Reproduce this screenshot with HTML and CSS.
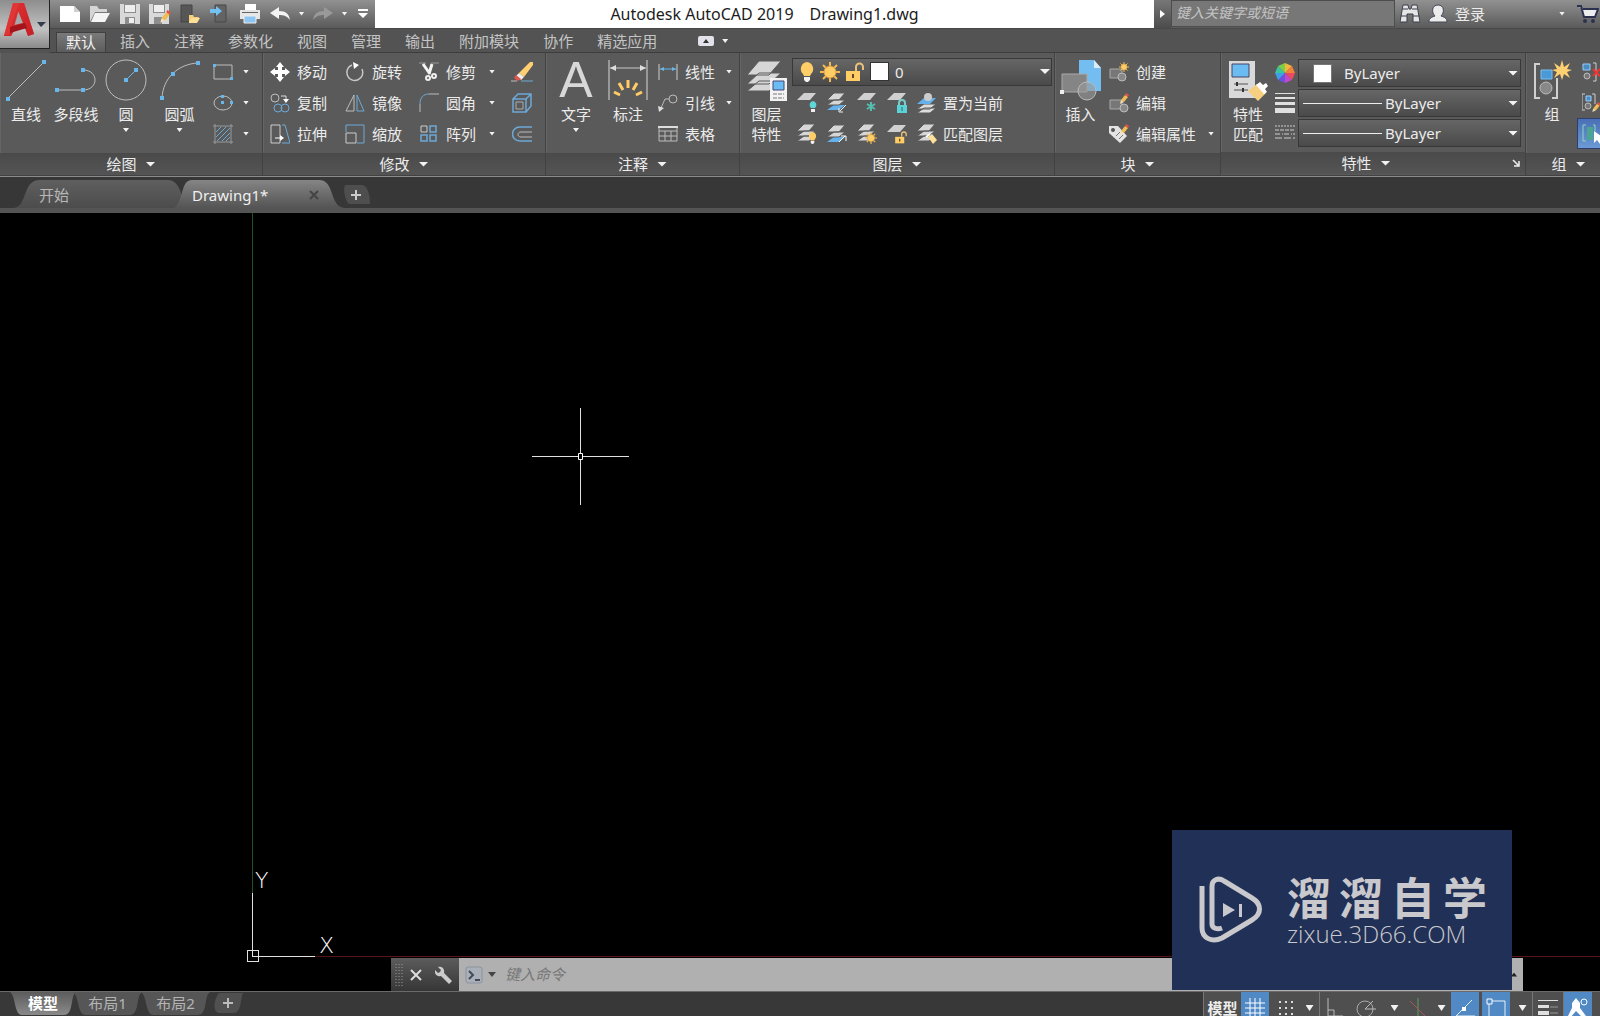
FILE: index.html
```html
<!DOCTYPE html>
<html lang="zh-CN">
<head>
<meta charset="utf-8">
<title>Autodesk AutoCAD 2019 - Drawing1.dwg</title>
<link rel="stylesheet" href="styles.css">
</head>
<body>
<svg class="sprite" aria-hidden="true">
  <defs>
    <linearGradient id="tabIdle" x1="0" y1="0" x2="0" y2="1"><stop offset="0" stop-color="#5f5f5f"/><stop offset="1" stop-color="#4c4c4c"/></linearGradient>
    <linearGradient id="tabOn" x1="0" y1="0" x2="0" y2="1"><stop offset="0" stop-color="#858585"/><stop offset="1" stop-color="#545454"/></linearGradient>
    <linearGradient id="layoutOn" x1="0" y1="0" x2="0" y2="1"><stop offset="0" stop-color="#5c5c5c"/><stop offset="1" stop-color="#8a8a8a"/></linearGradient>
    <linearGradient id="logoRed" x1="0" y1="0" x2="1" y2="1"><stop offset="0" stop-color="#f0453e"/><stop offset="1" stop-color="#a8141c"/></linearGradient>
  </defs>
  <symbol id="sheets" viewBox="0 0 20 20">
    <path d="M0 19l7-5h11l-6 5zM0 14l7-5h11l-6 5zM0 9l7-7h11l-6 7z" fill="#d6d6d6" stroke="#5a5a5a"/>
  </symbol>
  <symbol id="sheet" viewBox="0 0 20 20"><path d="M0 10l7-7h12l-6 7z" fill="#d0d0d0"/></symbol>
  <symbol id="blue-sheets" viewBox="0 0 20 20">
    <path d="M0 19l7-5h11l-6 5z" fill="#64b1ec"/><path d="M0 14l7-5h11l-6 5zM0 9l7-7h11l-6 7z" fill="#d6d6d6" stroke="#5a5a5a"/>
  </symbol>
  <symbol id="pencil" viewBox="0 0 10 12"><path d="M1 11l1-4 3 2z" fill="#f4e3c0"/><path d="M2 7l4-5 3 2-4 5z" fill="#f0bd55"/><path d="M6 2l1-2 3 2-1 2z" fill="#e2564a"/></symbol>
  <symbol id="bulb" viewBox="0 0 14 20"><path d="M7 0a7 7 0 0 0-4 12l1 2h6l1-2A7 7 0 0 0 7 0z" fill="#ffce66"/><path d="M4 15h6v3l-2 2H6l-2-2z" fill="#f2f2f2"/></symbol>
  <symbol id="sun" viewBox="0 0 20 20"><path d="M10 0v20M0 10h20M3 3l14 14M17 3L3 17" stroke="#f3b955" stroke-width="2"/><circle cx="10" cy="10" r="6" fill="#ffcc66" stroke="#d99d3c"/></symbol>
  <symbol id="unlock" viewBox="0 0 18 20"><path d="M10 9V5a3.500 3.500 0 0 1 7 0v3" fill="none" stroke="#e8c27b" stroke-width="2"/><rect y="9" width="14" height="10" fill="#ffcc66"/><path d="M7 12v4" stroke="#5a4a2a" stroke-width="2"/></symbol>
</svg>

<header class="top">
  <button class="app-menu" aria-label="应用程序菜单">
    <svg width="46" height="46" viewBox="0 0 46 46">
      <path d="M13 2h11l10 31-6 2-3-8-10 1-4 7H4z" fill="url(#logoRed)"/>
      <path d="M13 2h6l-6 18-4 14H4z" fill="#f05a50" opacity=".7"/>
      <path d="M18 10l5 12-9 2z" fill="#a8a8a8"/>
      <path d="M13 2h11l10 31-6 2-9-26-4 14-4 12H4z" fill="#d8262c" opacity=".6"/>
      <path d="M10 26l15-4 2 5-17 5z" fill="#a3141b"/>
      <path d="M37 21h9l-5 5z" fill="#333b4c"/>
    </svg>
  </button>

  <div class="titlebar">
    <div class="quick">
      <button aria-label="新建"><svg width="20" height="18" viewBox="0 0 20 18"><path d="M0 1h14l6 6v10H0z" fill="#fff"/><path d="M14 1v6h6z" fill="#cfcfcf"/></svg></button>
      <button aria-label="打开"><svg width="20" height="18" viewBox="0 0 20 18"><path d="M0 17V1h7l2 3h8v3H5z" fill="#d5d5d5"/><path d="M5 8h15l-5 9H1z" fill="#f4f4f4"/></svg></button>
      <button aria-label="保存"><svg width="20" height="20" viewBox="0 0 20 20"><path d="M0 0h20v20H0z" fill="#d9d9d9"/><path d="M4 0h12v9H4zM5 13h10v7H5z" fill="#8d8d8d"/><path d="M5 1h10v7H5zM9 14h5v5H9z" fill="#eee"/></svg></button>
      <button aria-label="另存为"><svg width="22" height="20" viewBox="0 0 22 20"><path d="M0 0h20v20H0z" fill="#d9d9d9"/><path d="M4 0h12v9H4zM5 13h8v7H5z" fill="#8d8d8d"/><path d="M5 1h10v7H5z" fill="#eee"/><use href="#pencil" x="10" y="6" width="12" height="14"/></svg></button>
      <button aria-label="从移动设备打开"><svg width="20" height="20" viewBox="0 0 20 20"><path d="M1 1h11v17H1z" fill="#565656" stroke="#444"/><path d="M9 18v-7h4l1 2h5l-3 6H9z" fill="#f5cf7c"/><path d="M9 18l3-4h8l-3 5H9z" fill="#ffdf98"/></svg></button>
      <button aria-label="保存到移动设备"><svg width="20" height="20" viewBox="0 0 20 20"><path d="M5 1h11v17H5z" fill="#636363" stroke="#484848"/><path d="M0 5h6V2l6 5-6 5V9H0z" fill="#74c2f4"/></svg></button>
      <button aria-label="打印"><svg width="20" height="20" viewBox="0 0 20 20"><path d="M5 0h11v6H5z" fill="#fff"/><path d="M0 6h20v9H0z" fill="#e6e6e6"/><path d="M2 8h16v1H2z" fill="#666"/><path d="M4 12h12v7H4z" fill="#8dc6f2" stroke="#eee"/></svg></button>
      <button aria-label="放弃"><svg width="20" height="14" viewBox="0 0 20 14"><path d="M0 6l9-6v4c7 0 10 3 11 9-3-4-6-5-11-5v4z" fill="#f4f4f4"/></svg></button>
      <button class="narrow" aria-label="放弃列表"><i class="caret"></i></button>
      <button aria-label="重做"><svg width="20" height="14" viewBox="0 0 20 14"><path d="M20 6l-9-6v4C4 4 1 7 0 13c3-4 6-5 11-5v4z" fill="#999"/></svg></button>
      <button class="narrow" aria-label="重做列表"><i class="caret"></i></button>
      <button class="menu" aria-label="自定义快速访问工具栏"><svg width="10" height="10" viewBox="0 0 10 10"><path d="M0 0h10v2H0zM0 4h10l-5 5z" fill="#fff"/></svg></button>
    </div>
    <h1 class="title"><span>Autodesk AutoCAD 2019</span><span>Drawing1.dwg</span></h1>
    <button class="search-toggle" aria-label="收拢搜索"><svg width="5" height="8" viewBox="0 0 5 8"><path d="M0 0l5 4-5 4z" fill="#fff"/></svg></button>
    <input class="search" type="text" placeholder="键入关键字或短语" aria-label="搜索">
    <div class="account">
      <button aria-label="查找"><svg width="20" height="20" viewBox="0 0 20 20"><path d="M3 1h5l1 4h2l1-4h5l3 17h-7v-8H7v8H0z" fill="#e4e4e4" stroke="#3c3f4c"/><path d="M1 12h6M13 12h6M3 5h5M12 5h5" stroke="#3c3f4c"/></svg></button>
      <button class="login"><svg width="20" height="20" viewBox="0 0 20 20"><path d="M1 18c0-4 3-5 6-6-4-4-3-11 3-11s7 7 3 11c3 1 6 2 6 6z" fill="#ececec" stroke="#444859"/></svg><span>登录</span></button>
      <button class="narrow" aria-label="账户菜单"><i class="caret"></i></button>
      <button aria-label="应用商店"><svg width="22" height="20" viewBox="0 0 22 20"><path d="M0 2h4l3 11h11l3-8H6" fill="#eee" stroke="#2d3150" stroke-width="2"/><circle cx="8" cy="17" r="2" fill="#2d3150"/><circle cx="16" cy="17" r="2" fill="#2d3150"/></svg></button>
    </div>
  </div>

  <nav class="ribbon-tabs">
    <button class="on">默认</button><button>插入</button><button>注释</button><button>参数化</button><button>视图</button><button>管理</button><button>输出</button><button>附加模块</button><button>协作</button><button>精选应用</button>
    <button class="minimize" aria-label="最小化功能区"><svg width="16" height="10" viewBox="0 0 16 10"><rect width="16" height="10" rx="2" fill="#e2e2ea"/><path d="M5 7l3-4 3 4z" fill="#333"/></svg><i class="caret"></i></button>
  </nav>
</header>

<main class="ribbon">
  <section class="panel draw">
    <div class="body">
      <button class="big"><svg width="44" height="44" viewBox="0 0 44 44"><path d="M4 40L40 4" stroke="#bdbdbd"/><path d="M2 39h4v4H2zM38 2h4v4h-4z" fill="#69b7ea"/></svg><span>直线</span></button>
      <button class="big"><svg width="44" height="44" viewBox="0 0 44 44"><path d="M3 32h26c16 0 16-20 0-20" fill="none" stroke="#bdbdbd"/><path d="M1 30h4v4H1zM27 30h4v4h-4zM27 10h4v4h-4z" fill="#69b7ea"/></svg><span>多段线</span></button>
      <button class="big"><svg width="44" height="44" viewBox="0 0 44 44"><circle cx="22" cy="22" r="20" fill="none" stroke="#bdbdbd"/><path d="M22 22L33 11" stroke="#69b7ea"/><path d="M20 20h4v4h-4zM30 10h4v4h-4z" fill="#69b7ea"/></svg><span>圆</span><i class="caret"></i></button>
      <button class="big"><svg width="44" height="44" viewBox="0 0 44 44"><path d="M4 40C5 20 20 6 40 5" fill="none" stroke="#bdbdbd"/><path d="M2 38h4v4H2zM13 14h4v4h-4zM38 3h4v4h-4z" fill="#69b7ea"/></svg><span>圆弧</span><i class="caret"></i></button>
      <div class="stack">
        <div class="row"><button class="ico" aria-label="矩形"><svg width="20" height="20" viewBox="0 0 20 20"><path d="M1 3h18v14H1z" fill="none" stroke="#bdbdbd"/><path d="M0 2h3v3H0zM17 15h3v3h-3z" fill="#69b7ea"/></svg></button><button class="drop" aria-label="矩形选项"><i class="caret"></i></button></div>
        <div class="row"><button class="ico" aria-label="椭圆"><svg width="20" height="20" viewBox="0 0 20 20"><ellipse cx="10" cy="10" rx="9" ry="7" fill="none" stroke="#bdbdbd"/><path d="M8 8h3v3H8zM8 2h3v3H8zM17 8h3v3h-3z" fill="#69b7ea"/></svg></button><button class="drop" aria-label="椭圆选项"><i class="caret"></i></button></div>
        <div class="row"><button class="ico" aria-label="图案填充"><svg width="20" height="20" viewBox="0 0 20 20"><path d="M3 8l5-5M3 13L13 3M4 17L17 4M9 17l8-8M13 17l4-4" stroke="#6da9d6"/><path d="M2 0v20M18 0v20M0 2h20M0 18h20" stroke="#999"/></svg></button><button class="drop" aria-label="填充选项"><i class="caret"></i></button></div>
      </div>
    </div>
    <button class="foot">绘图<i class="caret wide"></i></button>
  </section>

  <section class="panel modify">
    <div class="body">
      <div class="stack">
        <button class="tool"><svg width="20" height="20" viewBox="0 0 20 20"><path d="M10 0l4 5h-2v3h3V6l5 4-5 4v-2h-3v3h2l-4 5-4-5h2v-3H5v2l-5-4 5-4v2h3V5H6z" fill="#fff"/></svg><span>移动</span></button>
        <button class="tool"><svg width="20" height="20" viewBox="0 0 20 20"><circle cx="5" cy="5" r="4" fill="none" stroke="#bdbdbd"/><circle cx="8" cy="15" r="4" fill="none" stroke="#6da9d6"/><circle cx="15" cy="15" r="4" fill="none" stroke="#6da9d6"/><path d="M11 3h5v4" fill="none" stroke="#ddd"/><path d="M13 6h6l-3 4z" fill="#fff"/></svg><span>复制</span></button>
        <button class="tool"><svg width="20" height="20" viewBox="0 0 20 20"><path d="M1 1h9v18H1z" fill="none" stroke="#ccc"/><path d="M12 1h3l5 18h-8" fill="none" stroke="#6da9d6"/><path d="M5 14h6" stroke="#fff"/><path d="M10 11l4 3-4 3z" fill="#fff"/></svg><span>拉伸</span></button>
      </div>
      <div class="stack second">
        <button class="tool"><svg width="20" height="20" viewBox="0 0 20 20"><path d="M7 3a8 8 0 1 0 10 4" fill="none" stroke="#c8c8c8" stroke-width="1.500"/><path d="M8 0l6 3-5 4z" fill="#fff"/></svg><span>旋转</span></button>
        <button class="tool"><svg width="20" height="20" viewBox="0 0 20 20"><path d="M9 2v16H1z" fill="none" stroke="#bdbdbd"/><path d="M12 2v16h7z" fill="none" stroke="#6da9d6"/></svg><span>镜像</span></button>
        <button class="tool"><svg width="20" height="20" viewBox="0 0 20 20"><path d="M1 8V1h18v18h-7" fill="none" stroke="#6da9d6"/><path d="M1 9h10v10H1z" fill="none" stroke="#ccc"/></svg><span>缩放</span></button>
      </div>
      <div class="stack split">
        <div class="row"><button class="tool"><svg width="20" height="20" viewBox="0 0 20 20"><path d="M0 1h7M12 1h8" stroke="#999"/><path d="M4 2l7 10M13 2l-3 10" stroke="#f4f4f4" stroke-width="3"/><circle cx="9" cy="16" r="2" fill="none" stroke="#eee" stroke-width="2"/><circle cx="15" cy="14" r="2" fill="none" stroke="#eee" stroke-width="2"/></svg><span>修剪</span></button><button class="drop" aria-label="修剪选项"><i class="caret"></i></button></div>
        <div class="row"><button class="tool"><svg width="20" height="20" viewBox="0 0 20 20"><path d="M10 1h10M1 11v8" stroke="#bbb"/><path d="M1 11C1 5 4 1 10 1" fill="none" stroke="#6da9d6"/></svg><span>圆角</span></button><button class="drop" aria-label="圆角选项"><i class="caret"></i></button></div>
        <div class="row"><button class="tool"><svg width="20" height="20" viewBox="0 0 20 20"><path d="M11 2h6v6h-6zM2 11h6v6H2zM11 11h6v6h-6z" fill="none" stroke="#6da9d6" stroke-width="1.500"/><path d="M2 2h6v6H2z" fill="none" stroke="#ccc"/></svg><span>阵列</span></button><button class="drop" aria-label="阵列选项"><i class="caret"></i></button></div>
      </div>
      <div class="stack">
        <button class="ico" aria-label="删除"><svg width="22" height="20" viewBox="0 0 22 20"><path d="M8 11L19 0h3v3l-9 12z" fill="#ffcf70"/><path d="M8 11l5 4-3 3-5-4z" fill="#eee"/><path d="M5 13l5 4-3 2-4-3z" fill="#e3564b"/><path d="M0 19h6" stroke="#bbb"/><path d="M10 19h12" stroke="#6da9d6"/></svg></button>
        <button class="ico" aria-label="分解"><svg width="20" height="20" viewBox="0 0 20 20"><path d="M1 6h13v13H1zM1 6l5-5h13v12l-5 6M14 6l5-5" fill="none" stroke="#6da9d6" stroke-width="1.500"/><path d="M4 9h7v7H4z" fill="none" stroke="#aaa"/></svg></button>
        <button class="ico" aria-label="偏移"><svg width="20" height="20" viewBox="0 0 20 20"><path d="M20 3H8C-2 3-2 17 8 17h12" fill="none" stroke="#6da9d6" stroke-width="1.500"/><path d="M20 8H9c-4 0-4 5 0 5h11" fill="none" stroke="#bbb"/></svg></button>
      </div>
    </div>
    <button class="foot">修改<i class="caret wide"></i></button>
  </section>

  <section class="panel annotate">
    <div class="body">
      <button class="big"><b class="glyph-a" aria-hidden="true">A</b><span>文字</span><i class="caret"></i></button>
      <button class="big"><svg width="44" height="44" viewBox="0 0 44 44"><path d="M3 2v40M41 2v40" stroke="#d8d8d8"/><path d="M4 10h36" stroke="#c8c8c8"/><path d="M4 10l6-3v6zM40 10l-6-3v6z" fill="#ddd"/><path d="M22 22v8M13 25l4 7M31 25l-4 7M8 34l6 3M36 34l-6 3" stroke="#ffcc66" stroke-width="3"/></svg><span>标注</span></button>
      <div class="stack split">
        <div class="row"><button class="tool"><svg width="20" height="20" viewBox="0 0 20 20"><path d="M1 2v16M19 2v16" stroke="#ccc"/><path d="M2 7h16" stroke="#69b7ea"/><path d="M2 7l4-2v4zM18 7l-4-2v4z" fill="#69b7ea"/></svg><span>线性</span></button><button class="drop" aria-label="线性选项"><i class="caret"></i></button></div>
        <div class="row"><button class="tool"><svg width="20" height="20" viewBox="0 0 20 20"><circle cx="15" cy="6" r="4" fill="none" stroke="#bbb"/><path d="M11 6H7L3 15" fill="none" stroke="#bbb"/><path d="M0 13l6 2-5 4z" fill="#ddd"/></svg><span>引线</span></button><button class="drop" aria-label="引线选项"><i class="caret"></i></button></div>
        <button class="tool"><svg width="20" height="20" viewBox="0 0 20 20"><path d="M1 3h18v14H1zM1 7h18M1 12h18M7 7v10M13 7v10" fill="none" stroke="#bbb"/><path d="M0 3h20" stroke="#ddd" stroke-width="2"/></svg><span>表格</span></button>
      </div>
    </div>
    <button class="foot">注释<i class="caret wide"></i></button>
  </section>

  <section class="panel layers">
    <div class="body">
      <button class="big"><svg width="44" height="44" viewBox="0 0 44 44"><path d="M2 33l12-10h20L24 33zM2 26l12-11h22L24 26zM2 17L14 3h22L24 17z" fill="#d6d6d6" stroke="#5a5a5a"/><path d="M25 20h17v23H25z" fill="#f2f2f2"/><path d="M28 23h11v9H28z" fill="#6bbcf2" stroke="#447"/><path d="M28 36h11M28 40h11" stroke="#777" stroke-dasharray="4 1"/></svg><span>图层<br>特性</span></button>
      <div class="stack">
        <div class="combo">
          <svg width="14" height="20"><use href="#bulb"/></svg>
          <svg width="20" height="20"><use href="#sun"/></svg>
          <svg width="18" height="20"><use href="#unlock"/></svg>
          <i class="swatch"></i>
          <select aria-label="图层"><option>0</option></select>
        </div>
        <div class="row">
          <button class="ico" aria-label="关闭图层"><svg width="20" height="20" viewBox="0 0 20 20"><use href="#sheet" y="-3"/><path d="M16 8a4 4 0 0 0-2 7h4a4 4 0 0 0-2-7z" fill="#5fd6da"/><path d="M14 16h4v3h-4z" fill="#eee"/></svg></button>
          <button class="ico" aria-label="隔离"><svg width="20" height="20" viewBox="0 0 20 20"><use href="#blue-sheets" y="-2"/><path d="M19 12l-6 6M12 15v4h4" fill="none" stroke="#eee"/></svg></button>
          <button class="ico" aria-label="冻结"><svg width="20" height="20" viewBox="0 0 20 20"><use href="#sheet" y="-3"/><path d="M14 9v9M10 11l8 5M18 11l-8 5" stroke="#55bcae" stroke-width="2"/></svg></button>
          <button class="ico" aria-label="锁定"><svg width="20" height="20" viewBox="0 0 20 20"><use href="#sheet" y="-3"/><path d="M12 12v-2a3 3 0 0 1 6 0v2" fill="none" stroke="#7cc" stroke-width="2"/><path d="M10 12h10v8H10z" fill="#5bd2d5"/><path d="M15 14v4" stroke="#366"/></svg></button>
          <button class="tool wide-tool"><svg width="20" height="20" viewBox="0 0 20 20"><path d="M0 20l7-5h12l-6 5zM0 16l7-5h12l-6 5z" fill="#ddd" stroke="#5a5a5a"/><path d="M0 11l7-6h12l-6 6z" fill="#64b1ec"/><circle cx="11" cy="4" r="4" fill="#ccc"/></svg><span>置为当前</span></button>
        </div>
        <div class="row">
          <button class="ico" aria-label="打开所有图层"><svg width="20" height="20" viewBox="0 0 20 20"><use href="#sheets" y="-2"/><use href="#bulb" x="11" y="8" width="9" height="12"/></svg></button>
          <button class="ico" aria-label="取消隔离"><svg width="20" height="20" viewBox="0 0 20 20"><use href="#blue-sheets" y="-1"/><path d="M12 18l6-6M14 12h5v5" fill="none" stroke="#fff"/></svg></button>
          <button class="ico" aria-label="解冻所有图层"><svg width="20" height="20" viewBox="0 0 20 20"><use href="#sheets" y="-2"/><use href="#sun" x="8" y="8" width="12" height="12"/></svg></button>
          <button class="ico" aria-label="解锁"><svg width="20" height="20" viewBox="0 0 20 20"><use href="#sheet" y="-2"/><use href="#unlock" x="8" y="7" width="12" height="13"/></svg></button>
          <button class="tool wide-tool"><svg width="20" height="20" viewBox="0 0 20 20"><use href="#sheets" y="-2"/><path d="M11 13l4-3 5 6-4 4z" fill="#ffe09a"/><path d="M9 13l4-3" stroke="#fff" stroke-width="2"/></svg><span>匹配图层</span></button>
        </div>
      </div>
    </div>
    <button class="foot">图层<i class="caret wide"></i></button>
  </section>

  <section class="panel block">
    <div class="body">
      <button class="big"><svg width="44" height="44" viewBox="0 0 44 44"><path d="M20 2h15l7 8v23H20z" fill="#74bdf0"/><path d="M35 2v8h7z" fill="#d8ecfa"/><path d="M3 16h25v18H3z" fill="#858585" stroke="#aaa"/><circle cx="28" cy="33" r="9" fill="#999" fill-opacity=".6" stroke="#bbb"/><path d="M1 32h4v4H1z" fill="#eee"/></svg><span>插入</span></button>
      <div class="stack">
        <button class="tool"><svg width="20" height="20" viewBox="0 0 20 20"><path d="M1 7h12v9H1z" fill="#777" stroke="#aaa"/><circle cx="13" cy="15" r="4" fill="#888" stroke="#bbb"/><use href="#sun" x="10" y="0" width="10" height="10"/></svg><span>创建</span></button>
        <button class="tool"><svg width="20" height="20" viewBox="0 0 20 20"><path d="M1 7h12v9H1z" fill="#777" stroke="#aaa"/><circle cx="15" cy="15" r="4" fill="#888" stroke="#bbb"/><use href="#pencil" x="10" y="0" width="10" height="12"/></svg><span>编辑</span></button>
        <div class="row"><button class="tool"><svg width="20" height="20" viewBox="0 0 20 20"><path d="M0 2h9l9 10-7 7L0 9z" fill="#e4e4e4"/><circle cx="4" cy="6" r="2" fill="#555"/><path d="M7 12l4-4M10 15l4-4" stroke="#777"/><use href="#pencil" x="10" y="0" width="10" height="12"/></svg><span>编辑属性</span></button><button class="drop attr" aria-label="编辑属性选项"><i class="caret"></i></button></div>
      </div>
    </div>
    <button class="foot">块<i class="caret wide"></i></button>
  </section>

  <section class="panel props">
    <div class="body">
      <button class="big"><svg width="44" height="44" viewBox="0 0 44 44"><path d="M3 3h26v37H3z" fill="#d9d9d9"/><path d="M6 6h17v13H6z" fill="#6bbcf2" stroke="#446"/><path d="M8 26h14M8 32h14" stroke="#555"/><path d="M11 24v4M17 30v4" stroke="#333" stroke-width="2"/><path d="M22 33l9-7 9 9-8 8z" fill="#f8cf80"/><path d="M30 27l4-3 3 3 3-2 2 3-3 3 2 3-3 2z" fill="#fff"/></svg><span>特性<br>匹配</span></button>
      <div class="stack">
        <div class="row">
          <span class="lead"><svg width="20" height="20" viewBox="0 0 20 20"><path d="M10 10V0l7 3z" fill="#f5b63c"/><path d="M10 10l7-7 3 7z" fill="#f2813c"/><path d="M10 10h10l-3 7z" fill="#ee4a5e"/><path d="M10 10l7 7-7 3z" fill="#c447c8"/><path d="M10 10v10l-7-3z" fill="#6a51e0"/><path d="M10 10l-7 7-3-7z" fill="#3d9fe8"/><path d="M10 10H0l3-7z" fill="#3cc49a"/><path d="M10 10L3 3l7-3z" fill="#7bcf4a"/></svg></span>
          <div class="combo"><i class="swatch"></i><select aria-label="对象颜色"><option>ByLayer</option></select></div>
        </div>
        <div class="row">
          <span class="lead"><svg width="20" height="20" viewBox="0 0 20 20"><path d="M0 0h20v1H0zM0 4h20v2H0zM0 9h20v3H0zM0 15h20v5H0z" fill="#e0e0e0"/></svg></span>
          <div class="combo"><i class="line"></i><select aria-label="线宽"><option>ByLayer</option></select></div>
        </div>
        <div class="row">
          <span class="lead"><svg width="20" height="20" viewBox="0 0 20 20"><path d="M0 3h20" stroke="#ccc" stroke-dasharray="2 1"/><path d="M0 7h20" stroke="#ccc" stroke-dasharray="4 1"/><path d="M0 11h20" stroke="#ccc" stroke-dasharray="5 2 1 1"/><path d="M0 15h20" stroke="#ccc" stroke-dasharray="7 2"/></svg></span>
          <div class="combo"><i class="line"></i><select aria-label="线型"><option>ByLayer</option></select></div>
        </div>
      </div>
    </div>
    <div class="foot-row"><button class="foot">特性<i class="caret wide"></i></button><button class="launch" aria-label="特性选项板"><svg width="8" height="8" viewBox="0 0 8 8"><path d="M1 1l5 5M7 2v5H2" fill="none" stroke="#eee" stroke-width="1.500"/></svg></button></div>
  </section>

  <section class="panel group">
    <div class="body">
      <button class="big"><svg width="44" height="44" viewBox="0 0 44 44"><path d="M10 6H5v34h5M22 40h5V20" fill="none" stroke="#d0d0d0" stroke-width="2"/><path d="M11 12h11v9H11z" fill="#4b9ad6" stroke="#78bff0"/><circle cx="16" cy="30" r="6" fill="#888" stroke="#bbb"/><path d="M32 2l2 7 6-4-3 6 5 1-5 2 3 6-6-4-2 6-2-6-6 4 3-6-5-2 5-1-3-6 6 4z" fill="#ffd071"/></svg><span>组</span></button>
      <div class="stack">
        <button class="ico" aria-label="解除编组"><svg width="20" height="20" viewBox="0 0 20 20"><path d="M1 2h7v6H1z" fill="#4b8dbf" stroke="#9cf"/><circle cx="5" cy="14" r="3" fill="#777" stroke="#bbb"/><path d="M11 1h3v18h-3" fill="none" stroke="#ccc"/><path d="M11 7l7 7M18 7l-7 7" stroke="#e33" stroke-width="2"/></svg></button>
        <button class="ico" aria-label="组编辑"><svg width="20" height="20" viewBox="0 0 20 20"><path d="M3 1H0v16h3M10 1h3v10" fill="none" stroke="#ccc"/><path d="M4 3h5v5H4z" fill="#4b8dbf" stroke="#9cf"/><circle cx="6" cy="13" r="3" fill="#777" stroke="#bbb"/><use href="#pencil" x="9" y="9" width="10" height="11"/></svg></button>
        <button class="ico picked" aria-label="组选择"><svg width="20" height="20" viewBox="0 0 20 20"><path d="M4 1H1v16h3M11 1h2v6" fill="none" stroke="#8ed6c6"/><path d="M5 3h6v13H5z" fill="#4aa68f"/><path d="M12 7v12l3-3 3 4 1-8z" fill="#fff"/></svg></button>
      </div>
    </div>
    <button class="foot">组<i class="caret wide"></i></button>
  </section>
</main>

<nav class="doc-tabs">
  <button class="doc"><svg class="shape" viewBox="0 0 170 28" preserveAspectRatio="none"><path d="M0 28C14 26 8 0 26 0h128c10 0 14 12 16 28z" fill="url(#tabIdle)"/></svg><span>开始</span></button>
  <button class="doc on"><svg class="shape" viewBox="0 0 170 28" preserveAspectRatio="none"><path d="M0 28C10 22 6 0 18 0h127c16 0 10 26 25 28z" fill="url(#tabOn)"/></svg><span>Drawing1*</span><svg class="close" width="10" height="10" viewBox="0 0 10 10"><path d="M1 1l8 8M9 1L1 9" stroke="#444" stroke-width="2"/></svg></button>
  <button class="add" aria-label="新图形"><svg width="28" height="20" viewBox="0 0 28 20"><path d="M4 0h16c6 0 8 12 8 19H8C3 19 0 0 4 0z" fill="#4e4e4e"/><path d="M14 5v10M9 10h10" stroke="#ccc" stroke-width="2"/></svg></button>
</nav>

<section class="canvas" aria-label="绘图区">
  <i class="axis-y"></i><i class="axis-x"></i>
  <i class="ucs-y"></i><i class="ucs-x"></i><i class="ucs-box"></i>
  <span class="ucs-label y">Y</span><span class="ucs-label x">X</span>
  <svg class="cursor" width="97" height="97" viewBox="0 0 97 97"><path d="M48.500 0v45M48.500 52v45M0 48.500h46M51 48.500h46" stroke="#e0e0e0"/><path d="M46.500 45.500h4v6h-4z" fill="none" stroke="#fff"/></svg>

  <div class="command">
    <div class="grip">
      <svg width="8" height="22" viewBox="0 0 8 22"><path d="M1 0v22M4 0v22M7 0v22" stroke="#999" stroke-dasharray="1 2"/></svg>
      <button aria-label="关闭"><svg width="12" height="12" viewBox="0 0 12 12"><path d="M1 1l10 10M11 1L1 11" stroke="#ddd" stroke-width="2"/></svg></button>
      <button class="wrench" aria-label="自定义"><svg width="18" height="18" viewBox="0 0 18 18"><path d="M3 1l3 3-1 2-2 1-3-3c-1 5 3 7 6 6l8 8 3-3-8-8C10 3 7 0 3 1z" fill="#ccc"/></svg></button>
    </div>
    <button class="prompt" aria-label="最近使用的命令"><svg width="18" height="18" viewBox="0 0 18 18"><rect x="1" y="1" width="16" height="16" rx="2" fill="#a9b0b9" stroke="#8b939f"/><path d="M4 5l4 4-4 4M10 14h5" fill="none" stroke="#444b57" stroke-width="2"/></svg><i class="caret"></i></button>
    <input type="text" placeholder="键入命令" aria-label="命令">
    <i class="caret up"></i>
  </div>

  <aside class="brand">
    <svg width="66" height="68" viewBox="0 0 66 68"><path d="M4 10v42c0 10 10 15 20 10l30-18c10-6 10-16 0-22L26 5C20 1 14 4 14 10v38c0 4 5 6 10 4" fill="none" stroke="#c9c9cd" stroke-width="5" stroke-linejoin="round"/><path d="M25 27v14l12-7zM41 28h3v13h-3z" fill="#c9c9cd"/></svg>
    <div><p class="name"><span>溜</span><span>溜</span><span>自</span><span>学</span></p><p class="site">zixue.3D66.COM</p></div>
  </aside>
</section>

<footer class="status">
  <nav class="layouts">
    <button class="on"><svg class="shape" viewBox="0 0 66 23" preserveAspectRatio="none"><path d="M0 0h66C60 4 64 23 54 23H12C4 23 6 4 0 0z" fill="url(#layoutOn)"/></svg><span>模型</span></button>
    <button><svg class="shape" viewBox="0 0 66 23" preserveAspectRatio="none"><path d="M0 0h66C60 4 64 23 54 23H12C4 23 6 4 0 0z" fill="#565656"/></svg><span>布局1</span></button>
    <button><svg class="shape" viewBox="0 0 66 23" preserveAspectRatio="none"><path d="M0 0h66C60 4 64 23 54 23H12C4 23 6 4 0 0z" fill="#565656"/></svg><span>布局2</span></button>
    <button class="new" aria-label="新建布局"><svg width="30" height="20" viewBox="0 0 30 20"><path d="M6 0h24c-3 6-1 20-10 20H7C-2 20 2 4 6 0z" fill="#505050"/><path d="M15 5v10M10 10h10" stroke="#bbb" stroke-width="2"/></svg></button>
  </nav>
  <div class="toggles">
    <button class="model">模型</button>
    <button class="active" aria-label="栅格"><svg width="20" height="20" viewBox="0 0 20 20"><path d="M5 0v20M10 0v20M15 0v20M0 5h20M0 10h20M0 15h20" stroke="#fff"/></svg></button>
    <button aria-label="捕捉"><svg width="16" height="16" viewBox="0 0 16 16"><path d="M1 2h15M1 8h15M1 14h15" stroke="#ddd" stroke-width="2" stroke-dasharray="2 4"/></svg></button>
    <button class="pick" aria-label="捕捉选项"><i class="caret wide"></i></button>
    <button class="sep ortho" aria-label="正交"><svg width="20" height="20" viewBox="0 0 20 20"><path d="M5 0v18h15M5 12h6v6" fill="none" stroke="#bbb"/></svg></button>
    <button class="roomy" aria-label="极轴追踪"><svg width="20" height="20" viewBox="0 0 20 20"><circle cx="9" cy="11" r="8" fill="none" stroke="#aaa"/><path d="M9 11h11M9 11l8-8" stroke="#bbb"/></svg></button>
    <button class="pick" aria-label="极轴选项"><i class="caret wide"></i></button>
    <button aria-label="等轴测"><svg width="20" height="20" viewBox="0 0 20 20"><path d="M10 0v20" stroke="#5fa05f"/><path d="M2 3l15 15" stroke="#a55"/></svg></button>
    <button class="pick" aria-label="等轴测选项"><i class="caret wide"></i></button>
    <button class="active" aria-label="对象捕捉追踪"><svg width="20" height="20" viewBox="0 0 20 20"><path d="M17 2L1 18h19" fill="none" stroke="#e6f0fa"/><path d="M7 9h4v4H7z" fill="#fff"/></svg></button>
    <button class="active" aria-label="对象捕捉"><svg width="20" height="20" viewBox="0 0 20 20"><path d="M3 6v14M6 3h13v17" fill="none" stroke="#e6f0fa"/><path d="M1 1h5v5H1z" fill="none" stroke="#fff"/></svg></button>
    <button class="pick" aria-label="对象捕捉选项"><i class="caret wide"></i></button>
    <button class="sep" aria-label="显示线宽"><svg width="20" height="20" viewBox="0 0 20 20"><path d="M0 2h20v1H0zM0 7h11v3H0zM0 13h11v4H0z" fill="#e0e0e0"/><path d="M12 9h8M12 15h8" stroke="#999"/></svg></button>
    <button class="sep active" aria-label="注释可见性"><svg width="20" height="20" viewBox="0 0 20 20"><path d="M8 0l4 5v5l6 8-3 2-7-7-6 7-2-2 4-8V5z" fill="#fff"/><circle cx="16" cy="4" r="3" fill="none" stroke="#fff"/></svg></button>
  </div>
</footer>
</body>
</html>
```
FILE: styles.css
```css
* { box-sizing: border-box; }

body {
  margin: 0;
  height: 100vh;
  display: flex;
  flex-direction: column;
  overflow: hidden;
  background: #383838;
  color: #ececec;
  font: 15px/20px "Noto Sans", "Noto Sans CJK SC", sans-serif;
}

button, input, select { font: inherit; color: inherit; }

button {
  display: flex;
  align-items: center;
  justify-content: center;
  margin: 0;
  padding: 0;
  border: 0;
  background: none;
  white-space: nowrap;
}

svg { display: block; flex: none; }
.sprite { position: absolute; width: 0; height: 0; }

.caret {
  flex: none;
  width: 6px;
  height: 4px;
  background: #f2f2f2;
  clip-path: polygon(0 0, 100% 0, 50% 100%);
}
.caret.wide { width: 10px; height: 5px; }
.caret.up { background: #222; clip-path: polygon(0 100%, 100% 100%, 50% 0); }

/* Title bar and ribbon tabs */
.top {
  flex: none;
  display: grid;
  grid-template: 29px 24px / 50px 1fr;
  background: #535353;
}
.app-menu {
  grid-row: 1 / 3;
  height: 49px;
  justify-content: flex-start;
  background: linear-gradient(#8d8d8d, #c2c2c2 60%, #8a8a8a);
  border: solid #222;
  border-width: 0 1px 1px 0;
}
.titlebar {
  display: flex;
  background: linear-gradient(#919191, #5a5a5a);
  border-bottom: 1px solid #484848;
}
.quick { display: flex; flex: none; padding-left: 5px; }
.quick button, .account button { width: 30px; padding-bottom: 1px; }
.quick .narrow { width: 13px; }
.quick .menu { width: 24px; }
.title {
  flex: 1;
  display: flex;
  justify-content: center;
  align-items: center;
  gap: 16px;
  margin: 0;
  background: #fff;
  color: #1c1c1c;
  font-size: 16px;
  font-weight: 400;
  white-space: nowrap;
}
.search-toggle { width: 17px; background: linear-gradient(#777, #4c4c4c); }
.search {
  width: 224px;
  height: 27px;
  padding: 0 4px 2px;
  border: 1px solid #4d4d4d;
  background: #777;
  font-size: 14px;
  font-style: italic;
  line-height: 20px;
}
.search::placeholder { color: #c4c4c4; opacity: 1; }
.account { flex: none; display: flex; width: 205px; }
.account .login { width: auto; gap: 7px; padding-left: 3px; margin-right: auto; }
.account .narrow { width: 20px; }
.account button:last-child { width: 24px; margin-left: 4px; }

.ribbon-tabs {
  display: flex;
  align-items: flex-end;
  gap: 4px;
  padding-left: 6px;
  border-bottom: 1px solid #3d3d3d;
}
.ribbon-tabs button { height: 20px; padding: 0 10px 2px; color: #c4c4c4; }
.ribbon-tabs .on {
  padding: 0 9px 2px;
  background: linear-gradient(#7a7a7a, #5c5c5c);
  color: #f2f2f2;
  border: solid #404040;
  border-width: 1px 1px 0;
}
.ribbon-tabs .minimize { gap: 8px; margin-left: 17px; }

/* Ribbon */
.ribbon {
  flex: none;
  display: flex;
  overflow: hidden;
  background: #5a5a5a;
  border-bottom: 1px solid #8b8b8b;
}
.panel {
  flex: none;
  display: flex;
  flex-direction: column;
  border: solid #424242;
  border-width: 0 1px 1px 0;
  box-shadow: inset 1px 0 #656565;
}
.body { display: flex; padding: 3px 2px 4px; }
.foot {
  width: 100%;
  height: 22px;
  gap: 9px;
  background: linear-gradient(#4a4a4a, #545454);
}
.big {
  flex-direction: column;
  justify-content: flex-start;
  width: 51px;
  padding-top: 2px;
  line-height: 20px;
}
.big .caret { margin-top: 4px; }
.big > span { padding-top: 2px; }
.stack { display: grid; grid-template-rows: repeat(3, 31px); }
.row { display: flex; }
.tool { gap: 7px; padding-left: 4px; justify-content: flex-start; }
.ico { width: 30px; }
.drop { width: 16px; }

.draw .body { padding-right: 8px; padding-left: 1px; }
.draw .big { width: 50px; }
.draw .big:nth-child(4) { width: 57px; }
.modify .body { padding-left: 3px; padding-right: 8px; }
.modify .stack { width: 75px; }
.modify .stack.second { width: 74px; }
.modify .stack.split { width: 92px; }
.modify .stack:last-child { width: 30px; }
.split .drop { margin-left: 8px; }
.annotate .body { padding-left: 4px; }
.annotate .big { width: 52px; }
.annotate .split .drop { margin-left: 6px; }
.glyph-a {
  height: 44px;
  color: #d8d8d8;
  font: 50px/44px "Liberation Sans", Arial, sans-serif;
}

.layers .body { padding-left: 1px; padding-right: 2px; }
.layers .stack { width: 260px; }
.wide-tool { padding-left: 5px; gap: 6px; }
.block .body { padding-left: 1px; padding-right: 1px; }
.block .big { width: 49px; }
.attr { margin-left: 7px; }

.combo {
  flex: 1;
  align-self: center;
  display: flex;
  align-items: center;
  gap: 6px;
  height: 28px;
  padding: 0 1px 0 7px;
  border: 1px solid #383838;
  background: linear-gradient(#666, #4a4a4a);
}
.combo::after {
  content: "";
  width: 10px;
  height: 5px;
  background: #f4f4f4;
  clip-path: polygon(0 0, 100% 0, 50% 100%);
  pointer-events: none;
}
.combo select {
  flex: 1;
  min-width: 0;
  height: 26px;
  margin-right: -16px;
  padding: 0;
  appearance: none;
  border: 0;
  background: none;
}
.combo option { background: #555; }
.swatch { width: 19px; height: 19px; background: #fff; border: 1px solid #333; }

.props .body { padding-right: 4px; }
.props .big { width: 50px; }
.props .row { align-items: center; }
.props .stack { width: 248px; grid-template-rows: repeat(3, 30px); padding-top: 2px; }
.props .combo { padding: 0 2px 0 4px; gap: 3px; }
.props .swatch { margin: 0 9px 0 10px; border-color: #777; }
.line { width: 79px; height: 1px; background: #eee; }
.lead { width: 25px; padding-left: 2px; }
.foot-row { display: grid; grid-template-columns: 1fr; }
.foot-row > * { grid-area: 1 / 1; }
.foot-row .foot { padding-right: 14px; }
.launch { justify-self: end; width: 18px; }

.group { width: 86px; }
.group .body { padding-left: 1px; }
.group .big { width: 50px; }
.picked { background: linear-gradient(#4a6fb5, #6d9ad6); border: 1px solid #2c3f6e; }

/* Drawing tabs */
.doc-tabs {
  flex: none;
  display: flex;
  align-items: flex-end;
  height: 36px;
  padding-left: 14px;
  background: #373737;
  border-bottom: 5px solid #545454;
}
.doc {
  position: relative;
  width: 170px;
  height: 28px;
  justify-content: flex-start;
  padding: 2px 25px 0;
  color: #b8b8b8;
}
.doc.on { margin-left: -10px; padding-left: 18px; justify-content: space-between; color: #f0f0f0; }
.shape { position: absolute; inset: 0; width: 100%; height: 100%; }
.doc span, .doc .close, .layouts span { position: relative; }
.add { height: 25px; margin-left: -2px; align-items: flex-start; padding-top: 2px; }

/* Drawing area */
.canvas { position: relative; flex: 1; min-height: 0; background: #000; overflow: hidden; }
.canvas > * { position: absolute; }
.axis-y { left: 252px; top: 0; bottom: 98px; width: 1px; background: #1d561f; }
.axis-x { left: 315px; right: 0; bottom: 34px; height: 1px; background: #561416; }
.ucs-y { left: 252px; bottom: 34px; width: 1px; height: 64px; background: #e0e0e0; }
.ucs-x { left: 252px; bottom: 34px; width: 63px; height: 1px; background: #e0e0e0; }
.ucs-box { left: 247px; bottom: 29px; width: 12px; height: 12px; border: 1px solid #e0e0e0; }
.ucs-label { font: 200 22px/22px "DejaVu Sans", sans-serif; color: #fff; }
.ucs-label.y { left: 255px; bottom: 99px; }
.ucs-label.x { left: 319px; bottom: 34px; }
.cursor { left: 532px; top: 195px; }

.command {
  left: 391px;
  right: 77px;
  bottom: 0;
  height: 33px;
  display: flex;
  align-items: stretch;
  background: #b0b0b0;
}
.grip {
  display: flex;
  align-items: center;
  gap: 7px;
  width: 68px;
  padding-left: 4px;
  background: linear-gradient(#5c5c5c, #363636);
}
.wrench { margin-left: 6px; }
.prompt { gap: 5px; padding-left: 6px; }
.prompt .caret { width: 8px; height: 5px; background: #444; }
.command input {
  flex: 1;
  min-width: 0;
  padding: 0 9px 2px;
  border: 0;
  background: none;
  font-style: italic;
}
.command input::placeholder { color: #777; opacity: 1; }
.command .up { align-self: center; margin-right: 6px; }

.brand {
  right: 88px;
  bottom: 1px;
  display: flex;
  align-items: center;
  gap: 23px;
  width: 340px;
  height: 160px;
  padding-left: 26px;
  background: #213056;
  color: #c9c9cd;
}
.brand p { margin: 0; }
.name { display: flex; gap: 8px; font: 700 44px/48px "Noto Sans CJK SC", sans-serif; }
.site { font: 300 24px/28px "Open Sans", sans-serif; }

/* Status bar */
.status {
  flex: none;
  display: flex;
  justify-content: space-between;
  height: 25px;
  overflow: hidden;
  background: #383838;
  border-top: 1px solid #6a6a6a;
}
.layouts { display: flex; padding-left: 10px; }
.layouts button { position: relative; width: 69px; height: 23px; margin-left: -1px; padding-bottom: 1px; color: #b4b4b4; }
.layouts .on { width: 66px; margin-left: 0; margin-right: -2px; color: #fff; font-weight: 700; }
.layouts .new { width: 30px; margin-left: 3px; }

.toggles { display: flex; align-items: flex-start; height: 34px; background: #4f4f4f; border-left: 1px solid #777; }
.toggles button { flex: none; width: 28px; height: 32px; }
.toggles .model { width: 34px; margin-right: 3px; padding-left: 3px; font-weight: 700; }
.toggles .pick { width: 19px; }
.toggles .roomy { width: 40px; padding-left: 2px; }
.toggles .active { background: #5189c5; margin-right: 3px; }
.toggles .sep { width: 31px; border-left: 1px solid #777; }
.toggles .sep.ortho { width: 26px; }
.toggles .active.sep { width: 29px; margin-right: 8px; }
.toggles .caret.wide { width: 8px; height: 6px; }
```
